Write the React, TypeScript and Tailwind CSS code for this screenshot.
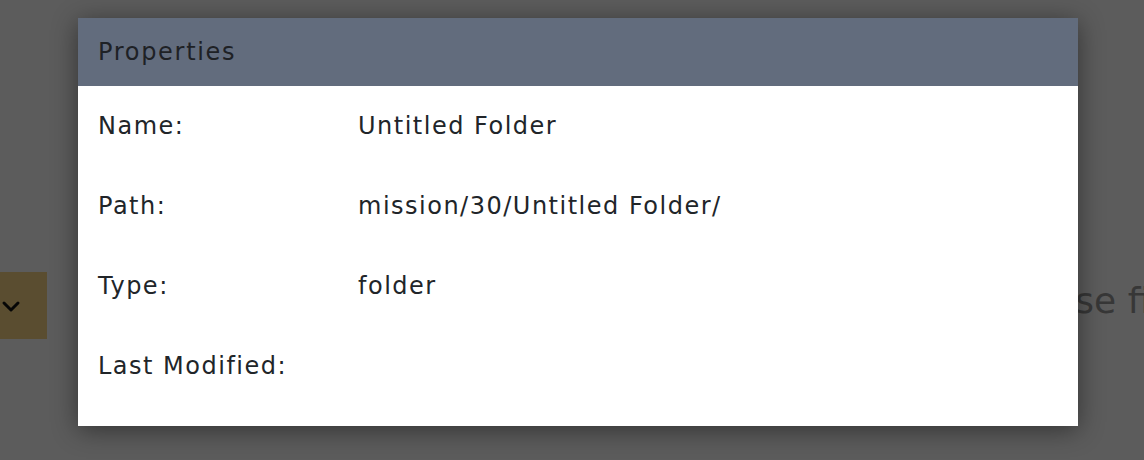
import React from "react";

const rows: [string, string][] = [
  ["Name:", "Untitled Folder"],
  ["Path:", "mission/30/Untitled Folder/"],
  ["Type:", "folder"],
  ["Last Modified:", ""],
];

export default function App() {
  return (
    <div
      className="relative w-full h-[460px] bg-white overflow-hidden"
      style={{ fontFamily: "'DejaVu Sans', sans-serif" }}
    >
      <div className="flex items-start pt-[272px]">
        <div className="w-[47px] h-[67px] shrink-0 bg-[#fad685] flex items-center">
          <svg width="24" height="24" viewBox="0 0 24 24" fill="none" stroke="#111" strokeWidth="3" strokeLinecap="round" strokeLinejoin="round">
            <path d="M4 9l7 7 7-7" />
          </svg>
        </div>
        <div className="ml-[940px] mt-[2px] text-[36px] text-[#9a9a9a] whitespace-nowrap">browse files</div>
      </div>
      <div className="absolute inset-0 bg-black/[0.64] flex justify-start pl-[78px] pt-[18px]">
        <div className="w-[1000px] h-[408px] bg-white shadow-[0_4px_24px_rgba(0,0,0,0.45)] flex flex-col text-[#212529]">
          <div className="h-[68px] bg-[#626c7d] px-5 flex items-center text-[24px] tracking-[1.7px] text-[#1e2125]">Properties</div>
          <div className="px-5 flex flex-col">
            {rows.map(([k, v]) => (
              <div key={k} className="h-[80px] flex items-center text-[24px] tracking-[1.5px]">
                <div className="w-[260px]">{k}</div>
                <div>{v}</div>
              </div>
            ))}
          </div>
        </div>
      </div>
    </div>
  );
}
